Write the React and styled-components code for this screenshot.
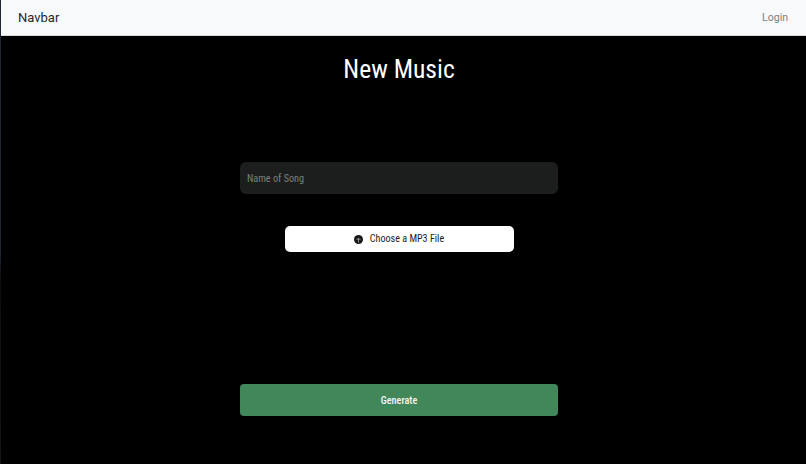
import styled, { createGlobalStyle } from 'styled-components'

const GlobalStyle = createGlobalStyle`
    html, body {
        margin: 0;
        padding: 0;
        height: 100%;
        background-color: #000;
    }
`

const Page = styled.div`
    display: flex;
    height: 464px;
    overflow: hidden;
    background-color: #000;
`

const EdgeStrip = styled.div`
    flex: 0 0 1px;
    background: linear-gradient(#1c2530 0, #1c2530 55%, #0d0e10 60%, #141516 100%);
`

const Column = styled.div`
    flex: 1;
    display: flex;
    flex-direction: column;
`

const Navbar = styled.nav`
    flex: 0 0 36px;
    display: flex;
    align-items: center;
    justify-content: space-between;
    padding: 0 18px 0 17px;
    background-color: #f8f9fa;
    border-bottom: 1px solid #d8d9da;
    box-sizing: border-box;
    font-family: Roboto, "Liberation Sans", sans-serif;
`

const Brand = styled.a`
    font-size: 13px;
    color: #25282b;
`

const NavLink = styled.a`
    font-size: 10.5px;
    color: #7d7f81;
`

const Main = styled.main`
    flex: 1;
    display: flex;
    flex-direction: column;
    align-items: center;
    padding-right: 9px;
    font-family: "Roboto Condensed", "Liberation Sans Narrow", Roboto, sans-serif;
    font-stretch: condensed;
`

const Title = styled.h1`
    margin: 17px 0 0;
    font-size: 25.6px;
    line-height: 32px;
    font-weight: 400;
    color: #fff;
`

const SongInput = styled.input`
    width: 318px;
    height: 32px;
    margin-top: 77px;
    padding: 0 7px;
    box-sizing: border-box;
    border: none;
    border-radius: 6px;
    outline: none;
    background-color: #1c1e1e;
    color: #fff;
    font-family: inherit;
    font-stretch: inherit;
    font-size: 10.2px;

    &::placeholder {
        color: #7c7e7e;
        opacity: 1;
    }
`

const FileButton = styled.label`
    display: flex;
    align-items: center;
    justify-content: center;
    gap: 7px;
    width: 229px;
    height: 26.5px;
    margin-top: 31.5px;
    border-radius: 5px;
    background-color: #fff;
    color: #1c1e20;
    font-size: 10.1px;
`

const FileIcon = styled.svg`
    width: 9px;
    height: 9px;
    margin-top: 1px;
`

const GenerateButton = styled.button`
    width: 318px;
    height: 32px;
    margin-top: 132px;
    border: none;
    border-radius: 4px;
    background-color: #418759;
    color: #f4f8f5;
    font-family: inherit;
    font-stretch: inherit;
    font-size: 10.2px;
    font-weight: 500;
`

export default function App() {
    return (
        <>
            <GlobalStyle />
            <Page>
                <EdgeStrip />
                <Column>
                    <Navbar>
                        <Brand>Navbar</Brand>
                        <NavLink>Login</NavLink>
                    </Navbar>

                    <Main>
                        <Title>New Music</Title>
                        <SongInput placeholder='Name of Song' />

                        <FileButton>
                            <FileIcon viewBox='0 0 16 16'>
                                <circle cx='8' cy='8' r='8' fill='#16181a' />
                                <path d='M8 5.5v8M4.5 9 8 5.5 11.5 9' stroke='#9a9c9e' strokeWidth='1.6' fill='none' />
                            </FileIcon>
                            Choose a MP3 File
                        </FileButton>

                        <GenerateButton>Generate</GenerateButton>
                    </Main>
                </Column>
            </Page>
        </>
    )
}
